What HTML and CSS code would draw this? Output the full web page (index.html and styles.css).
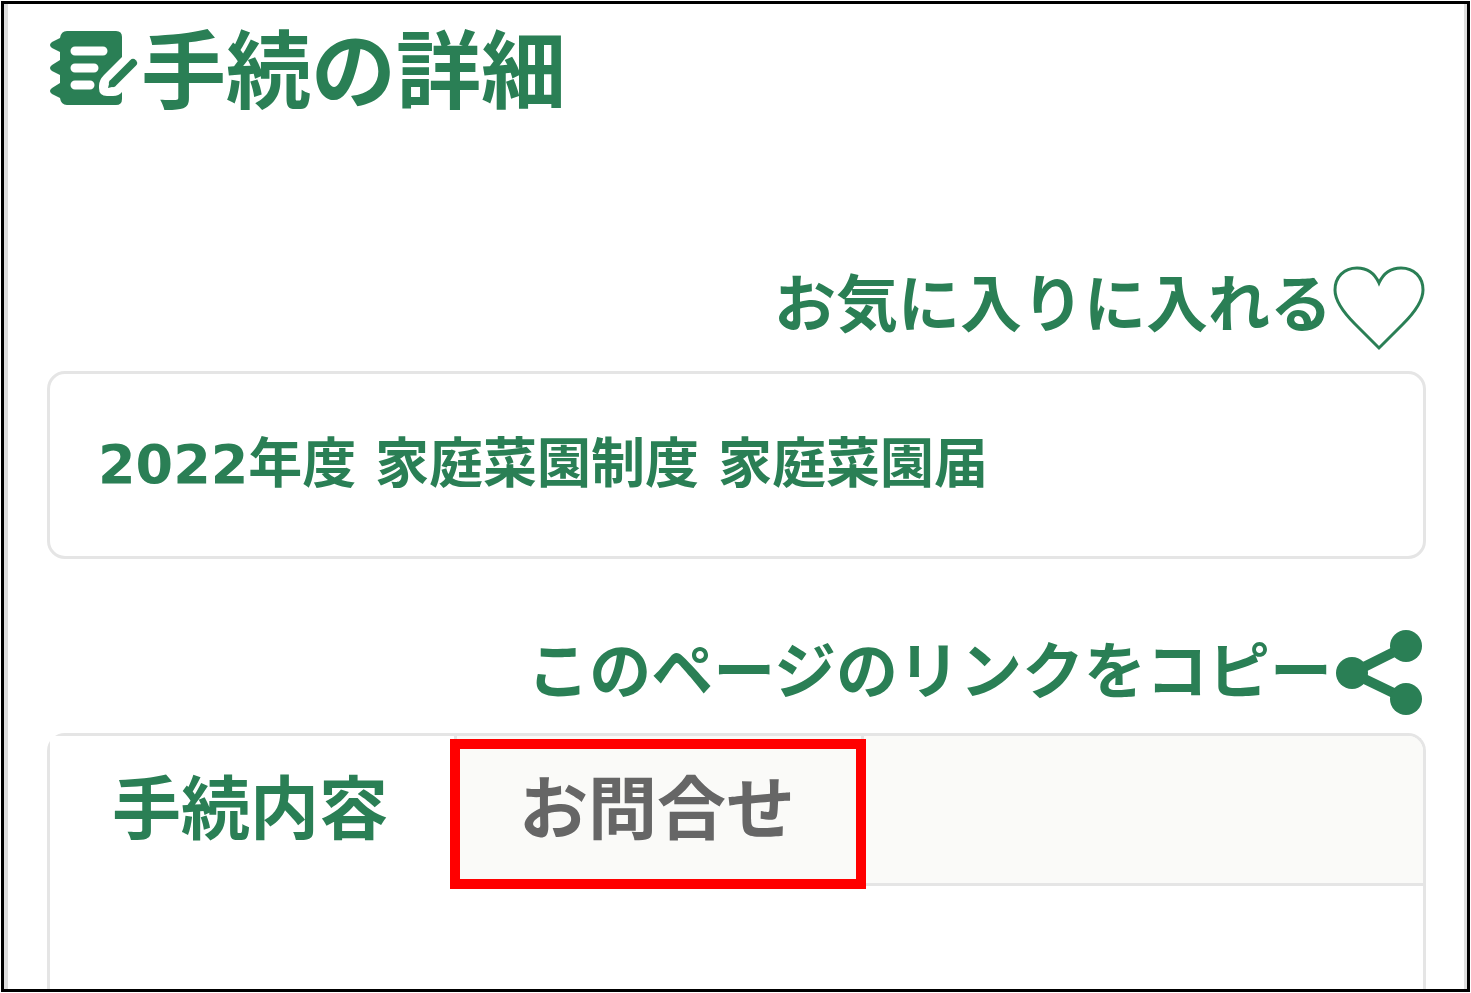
FILE: index.html
```
<!DOCTYPE html>
<html lang="ja">
<head>
  <meta charset="UTF-8">
  <meta name="viewport" content="width=device-width, initial-scale=1.0">
  <title>手続の詳細</title>
  <link rel="stylesheet" href="styles.css">
</head>
<body>
  <div class="frame">
    <main class="page">
      <h1 class="page-title">
        <svg class="icon" viewBox="0 0 94 94" aria-hidden="true">
          <path d="M20 10H69Q75 10 75 16V36L57 54Q52 59 52 65V67Q52 75 60 75H66Q72 75 75 71V78Q75 84 69 84H20Q14 84 13 77L5 73Q1 70 5 67L13 62V54L5 50Q1 47 5 44L13 39V31L5 27Q1 24 5 21L13 17Q14 10 20 10Z" fill="currentColor"/>
          <path d="M28 30H56M28 47H47M28 64H43" stroke="#fff" stroke-width="9" stroke-linecap="round"/>
          <path d="M66 62L86 42" stroke="currentColor" stroke-width="8" stroke-linecap="round"/>
          <path d="M61 67L63 59L69 65Z" fill="currentColor"/>
        </svg>
        <span>手続の詳細</span>
      </h1>

      <button type="button" class="action favorite">
        <span>お気に入りに入れる</span>
        <svg class="icon" viewBox="0 0 94 94" aria-hidden="true">
          <path d="M47 88L23 64C11 52 3 41 3 30C3 17 12 8 25 8C36 8 43 14 47 23C51 14 58 8 69 8C82 8 91 17 91 30C91 41 83 52 71 64Z" fill="none" stroke="currentColor" stroke-width="3"/>
        </svg>
      </button>

      <section class="card">
        <h2 class="card-title">2022年度 家庭菜園制度 家庭菜園届</h2>
      </section>

      <button type="button" class="action copy-link">
        <span>このページのリンクをコピー</span>
        <svg class="icon" viewBox="0 0 94 94" aria-hidden="true">
          <path d="M74 19L20 46L74 72" fill="none" stroke="currentColor" stroke-width="10"/>
          <circle cx="20" cy="46" r="16" fill="currentColor"/>
          <circle cx="74" cy="19" r="16" fill="currentColor"/>
          <circle cx="74" cy="72" r="16" fill="currentColor"/>
        </svg>
      </button>

      <div class="tabs" role="tablist">
        <button type="button" class="tab active" role="tab" aria-selected="true">手続内容</button>
        <button type="button" class="tab marked" role="tab" aria-selected="false">お問合せ</button>
        <div class="tabs-rest"></div>
      </div>
      <div class="panel" role="tabpanel"></div>
    </main>
  </div>
</body>
</html>
```
FILE: styles.css
```
* {
  box-sizing: border-box;
}

body {
  margin: 0;
  background: #fff;
  color: #2a7f55;
  font-family: "Noto Sans CJK JP", sans-serif;
  font-weight: 700;
}

button {
  margin: 0;
  padding: 0;
  border: 0;
  background: none;
  color: inherit;
  font: inherit;
  white-space: nowrap;
  cursor: pointer;
}

/* outer black frame */
.frame {
  display: flex;
  min-height: 100vh;
  padding: 1px;
}

.page {
  flex: 1;
  display: flex;
  flex-direction: column;
  padding: 17px 38px 0 39px;
  border: solid #ddd;
  border-width: 0 3px 0 4px;
  outline: 3px solid #000;
  margin: 3px;
}

.icon {
  flex: none;
  width: 94px;
  height: 94px;
}

.page-title {
  display: flex;
  align-items: flex-start;
  margin: 0;
  font-size: 85px;
  line-height: 88px;
}

/* right-aligned text buttons */
.action {
  display: flex;
  align-items: flex-start;
  align-self: flex-end;
  font-size: 62px;
  line-height: 80px;
}

.favorite {
  margin-top: 145px;
}

.copy-link {
  margin-top: 68px;
}

.card {
  margin-top: 17px;
  padding: 53px 48px;
  border: 3px solid #e5e5e5;
  border-radius: 18px;
}

.card-title {
  margin: 0;
  font-family: "DejaVu Sans", "Noto Sans CJK JP", sans-serif;
  font-size: 54px;
  line-height: 76px;
}

/* tabs */
.tabs {
  display: flex;
  position: relative;
  margin-top: 12px;
  border: 3px solid #e5e5e5;
  border-bottom: 0;
  border-radius: 18px 18px 0 0;
}

/* the first tab leaves the corner open */
.tabs::before {
  content: "";
  position: absolute;
  top: -3px;
  left: -3px;
  width: 8px;
  height: 8px;
  background: #fff;
}

.tab {
  position: relative;
  padding: 24px 66px 35px 62px;
  border-right: 3px solid #e5e5e5;
  border-bottom: 3px solid #e5e5e5;
  background: #fafaf8;
  color: #666;
  font-size: 69px;
  line-height: 88px;
}

.tab.active {
  border-bottom-color: #fff;
  background: #fff;
  color: #2a7f55;
}

.tabs-rest {
  flex: 1;
  border-bottom: 3px solid #e5e5e5;
  border-top-right-radius: 15px;
  background: #fafaf8;
}

.tab.marked::after {
  content: "";
  position: absolute;
  top: 3px;
  left: -7px;
  right: -5px;
  bottom: -6px;
  border: 10px solid #f00;
}

.panel {
  flex: 1;
  min-height: 100px;
  border: solid #e5e5e5;
  border-width: 0 3px;
}
```
